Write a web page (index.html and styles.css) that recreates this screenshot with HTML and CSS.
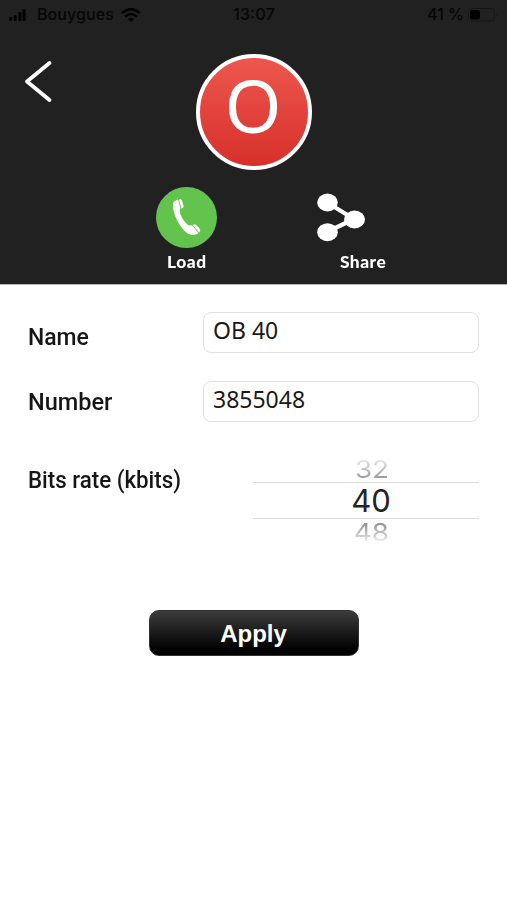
FILE: index.html
```html
<!DOCTYPE html>
<html lang="en">
<head>
<meta charset="utf-8">
<title>OB 40</title>
<link rel="stylesheet" href="styles.css">
</head>
<body>
<header class="header">
  <div class="status">
    <div class="carrier">
      <svg width="18" height="12" viewBox="0 0 18 12"><rect y="8" width="3" height="4" rx="1"/><rect x="4.7" y="6" width="3" height="6" rx="1"/><rect x="9.4" y="3" width="3" height="9" rx="1"/><rect x="13.500" width="3" height="12" rx="1"/></svg>
      <span class="carrier-name">Bouygues</span>
      <svg class="wifi" width="20" height="14" viewBox="0 0 20 14" fill="none" stroke="#000" stroke-width="2.5"><path d="M1 5.2Q10-3 19 5.2M4.2 8.5q5.800-5 11.600 0"/><path d="M7 11q3-2.600 6 0l-3 3z" fill="#000" stroke="none"/></svg>
    </div>
    <span class="time">13:07</span>
    <div class="power"><span>41 %</span><svg width="31" height="14" viewBox="0 0 31 14"><rect x=".5" y=".5" width="26" height="12.500" rx="3.500" fill="none" stroke="#181818"/><rect x="2" y="2" width="10" height="9.500" rx="2"/><path d="M28.500 4.500q2 2.500 0 5z" fill="#181818"/></svg></div>
  </div>
  <div class="hero">
    <svg class="back" width="30" height="44" viewBox="0 0 30 44" fill="none" stroke="#fff" stroke-width="3.800" stroke-linecap="round" stroke-linejoin="round"><path d="M25.500 4 3 22.500 25.500 41"/></svg>
    <div class="avatar"><span>O</span></div>
  </div>
  <div class="actions">
    <div class="action">
      <svg width="62" height="62" viewBox="0 0 62 62"><circle cx="30.500" cy="31.500" r="30.500" fill="#62c34d"/><path fill="#fff" d="M17 17.500Q17.500 15 22 13.600L24.500 22.800Q23 24.500 24.500 28.500Q27.500 36 33 39.500L36 39.300L42.500 47.200Q38.500 50 34 48.500C26.500 46 16 29 17 17.500ZM22.800 13.400Q25 12.500 25.900 14.200L27.700 20.300Q27.700 22 25.400 22.500ZM36.800 39.200Q38 37.500 40 38.700L44 42.900Q44.900 44.700 43.200 46.500Z"/></svg>
      <span class="caption">Load</span>
    </div>
    <div class="action">
      <svg class="share-icon" width="66" height="62" viewBox="0 0 66 62" fill="#fff"><path d="M27 16.500 54 33 27 46" fill="none" stroke="#fff" stroke-width="4.200"/><ellipse cx="27.500" cy="16.500" rx="10.300" ry="9"/><ellipse cx="54.500" cy="33.500" rx="10.500" ry="9"/><ellipse cx="27.500" cy="46.200" rx="10.300" ry="9"/></svg>
      <span class="caption">Share</span>
    </div>
  </div>
</header>
<main class="form">
  <div class="row"><span class="label name">Name</span><div class="field">OB 40</div></div>
  <div class="row"><span class="label number">Number</span><div class="field">3855048</div></div>
  <div class="row rate-row"><span class="label rate">Bits rate (kbits)</span>
    <div class="picker"><div class="option before"><span>32</span></div><div class="option selected"><span>40</span></div><div class="option after"><span>48</span></div></div>
  </div>
  <button class="apply">Apply</button>
</main>
</body>
</html>
```
FILE: styles.css
```css
* { box-sizing: border-box; }
body { margin: 0; height: 900px; background: #fff; overflow: hidden; font-family: "Noto Sans", sans-serif; }
svg { display: block; flex: none; }
.header { height: 284px; background: #212121; box-shadow: 0 1px #b8b8b8; }
.status { height: 29px; padding: 0 8px 0 9px; display: grid; grid-template-columns: 1fr auto 1fr; align-items: center; font: 500 16px/29px Inter, sans-serif; color: #060606; }
.carrier, .power { display: flex; align-items: center; }
.carrier-name { margin-left: 10px; letter-spacing: .1px; }
.wifi { margin-left: 7px; }
.time { font-size: 16.500px; }
.power { justify-content: flex-end; gap: 4px; }
.hero { height: 158px; display: grid; grid-template-columns: 1fr 116px 1fr; padding-top: 25px; }
.back { margin: 5px 0 0 24px; }
.avatar { width: 116px; height: 116px; border: 4px solid #fff; border-radius: 50%; background: linear-gradient(#ed574e, #d7302b); color: #fff; font-size: 73px; line-height: 98px; text-align: center; }
.avatar span { display: block; margin: -2px 1px 0 0; }
.actions { display: grid; grid-template-columns: 177px 177px; justify-content: start; padding-left: 98px; margin-top: -1px; }
.action { display: flex; flex-direction: column; align-items: center; color: #fff; }
.caption { margin-top: 3px; font: 900 16.500px/22px Lato, sans-serif; letter-spacing: .5px; white-space: nowrap; transform: scaleX(1.050); }
.share-icon { margin-left: -61px; }
.form { padding: 28px 28px 0; display: flex; flex-direction: column; }
.row { display: grid; grid-template-columns: 175px 276px; height: 68.500px; }
.label { justify-self: start; font: 500 24px/32px Roboto, sans-serif; color: #161616; white-space: nowrap; transform-origin: 0 50%; }
.name { margin-top: 9px; transform: scaleX(.955); }
.number { margin-top: 5px; transform: scaleX(.98); }
.field { height: 41px; border: 1px solid #e1e1e1; border-radius: 8px; padding-left: 9px; font-size: 23px; line-height: 34px; color: #1a1a1a; }
.rate-row { height: 161px; grid-template-columns: 225px 226px; }
.rate { margin-top: 15px; transform: scaleX(.93); }
.picker { margin-top: 4px; text-align: center; font-family: Inter, sans-serif; }
.option { height: 29px; line-height: 34px; font-size: 26px; padding-left: 11px; color: transparent; }
.option span { display: inline-block; }
.before span, .after span { background-clip: text; -webkit-background-clip: text; transform: scale(1.070, .94); }
.before span { background-image: linear-gradient(#ececec 15%, #969696 80%); }
.after { line-height: 28px; }
.after span { background-image: linear-gradient(#969696 20%, #f1f1f1 85%); }
.selected { height: 37px; line-height: 36px; font-size: 31px; border-top: 1px solid #dedede; border-bottom: 1px solid #dedede; padding-left: 10px; color: #242424; }
.apply { align-self: center; width: 210px; height: 46px; border: 1px solid #303030; border-radius: 10px; padding: 2px 0 0; background: linear-gradient(#3c3c3c, #000 88%); color: #fff; font: bold 24px/42px "Liberation Sans", sans-serif; }
```
